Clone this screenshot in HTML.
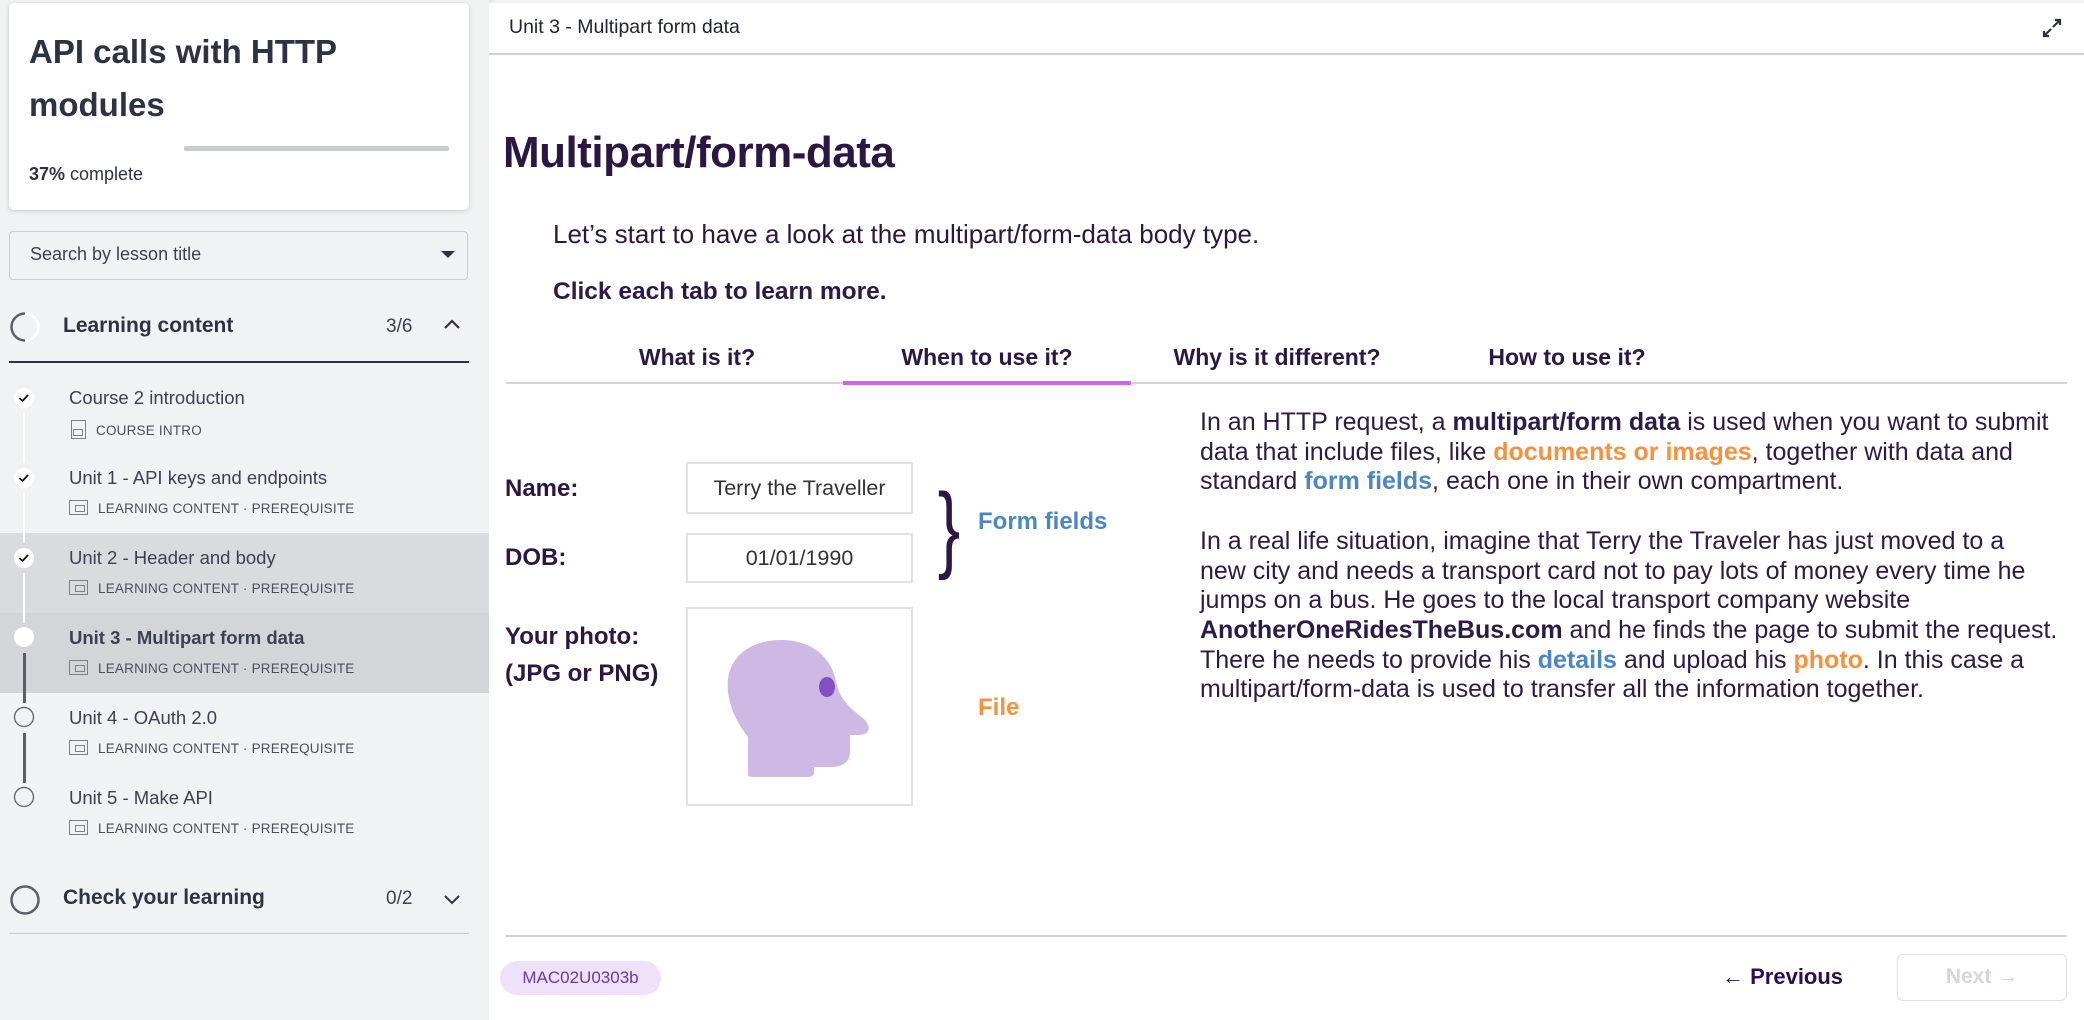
<!DOCTYPE html>
<html><head><meta charset="utf-8"><style>
*{margin:0;padding:0;box-sizing:border-box}
body{width:2084px;height:1020px;overflow:hidden;background:#f1f2f4;font-family:"Liberation Sans",sans-serif;position:relative}
.a{position:absolute;white-space:nowrap}
#side{position:absolute;left:0;top:0;width:489px;height:1020px;background:#f1f2f4;box-shadow:2px 0 6px rgba(0,0,0,.12)}
.card{position:absolute;left:9px;top:3px;width:460px;height:207px;background:#fff;border-radius:5px;box-shadow:0 1px 4px rgba(0,0,0,.18)}
.st{color:#3c4152}
.ti{font-size:18.5px;color:#3c4152}
.sub{font-size:13.5px;color:#4a4f5e;letter-spacing:.2px}
.ic{display:inline-block;width:19px;height:15px;border:1.5px solid #7a7f8c;vertical-align:-2px;margin-right:10px;position:relative}
.ic:after{content:"";position:absolute;right:2px;bottom:2px;width:8px;height:5px;border:1.2px solid #7a7f8c}
#main{position:absolute;left:489px;top:3px;width:1595px;height:1017px;background:#fff}
.m{color:#2b1744}
</style></head><body>
<div id="side">
 <div class="card">
  <div class="a" style="left:20px;top:22px;font-size:33px;line-height:53px;color:#2e3344;font-weight:bold;white-space:normal;width:420px">API calls with HTTP modules</div>
  <div class="a" style="left:175px;top:143px;width:265px;height:5px;background:#c8cad2;border-radius:2px"></div>
  <div class="a" style="left:20px;top:161px;font-size:18px;color:#2e3344"><b>37%</b> complete</div>
 </div>
 <div class="a" style="left:9px;top:231px;width:459px;height:49px;border:1px solid #c9ccd3;border-radius:4px;background:#f1f2f4"></div>
 <div class="a st" style="left:30px;top:244px;font-size:18px">Search by lesson title</div>
 <div class="a" style="left:441px;top:251px;width:0;height:0;border-left:7px solid transparent;border-right:7px solid transparent;border-top:7px solid #2e3344"></div>
 <svg class="a" style="left:9px;top:311px" width="32" height="32"><circle cx="16" cy="16" r="13.5" fill="none" stroke="#fff" stroke-width="2.5"/><path d="M16 2.5 A13.5 13.5 0 0 0 16 29.5" fill="none" stroke="#5a5f6c" stroke-width="2.5"/></svg>
 <div class="a" style="left:63px;top:314px;font-size:21px;font-weight:bold;color:#2e3344">Learning content</div>
 <div class="a st" style="left:386px;top:316px;font-size:19px">3/6</div>
 <svg class="a" style="left:443px;top:318px" width="18" height="12"><path d="M2 10 L9 3 L16 10" fill="none" stroke="#2e3344" stroke-width="2.2"/></svg>
 <div class="a" style="left:9px;top:361px;width:460px;height:1.5px;background:#2e3344"></div>
 <div class="a" style="left:0;top:533px;width:489px;height:80px;background:#dadbdf"></div>
 <div class="a" style="left:0;top:613px;width:489px;height:80px;background:#d4d5d9"></div>
 <div class="a" style="left:23px;top:413px;width:2px;height:50px;background:#fff"></div>
 <div class="a" style="left:23px;top:493px;width:2px;height:50px;background:#fff"></div>
 <div class="a" style="left:23px;top:573px;width:2px;height:50px;background:#fff"></div>
 <div class="a" style="left:23px;top:653px;width:2.5px;height:50px;background:#5a5f6c"></div>
 <div class="a" style="left:23px;top:733px;width:2.5px;height:50px;background:#5a5f6c"></div>
 <svg class="a" style="left:13px;top:387px" width="22" height="22"><circle cx="11" cy="11" r="10" fill="#fff"/><path d="M6.5 11 L9.5 14 L15 8" fill="none" stroke="#111" stroke-width="1.8"/></svg>
 <svg class="a" style="left:13px;top:467px" width="22" height="22"><circle cx="11" cy="11" r="10" fill="#fff"/><path d="M6.5 11 L9.5 14 L15 8" fill="none" stroke="#111" stroke-width="1.8"/></svg>
 <svg class="a" style="left:13px;top:547px" width="22" height="22"><circle cx="11" cy="11" r="10" fill="#fff"/><path d="M6.5 11 L9.5 14 L15 8" fill="none" stroke="#111" stroke-width="1.8"/></svg>
 <svg class="a" style="left:13px;top:626px" width="22" height="22"><circle cx="11" cy="11" r="10" fill="#fff"/></svg>
 <svg class="a" style="left:13px;top:706px" width="22" height="22"><circle cx="11" cy="11" r="9.5" fill="none" stroke="#5a5f6c" stroke-width="1.3"/></svg>
 <svg class="a" style="left:13px;top:786px" width="22" height="22"><circle cx="11" cy="11" r="9.5" fill="none" stroke="#5a5f6c" stroke-width="1.3"/></svg>
 <div class="a ti" style="left:69px;top:387px">Course 2 introduction</div>
 <div class="a sub" style="left:71px;top:420px"><span class="ic" style="width:15px;height:19px;vertical-align:-4px"></span>COURSE INTRO</div>
 <div class="a ti" style="left:69px;top:467px">Unit 1 - API keys and endpoints</div>
 <div class="a sub" style="left:69px;top:500px"><span class="ic"></span>LEARNING CONTENT · PREREQUISITE</div>
 <div class="a ti" style="left:69px;top:547px">Unit 2 - Header and body</div>
 <div class="a sub" style="left:69px;top:580px"><span class="ic"></span>LEARNING CONTENT · PREREQUISITE</div>
 <div class="a ti" style="left:69px;top:627px;font-weight:bold">Unit 3 - Multipart form data</div>
 <div class="a sub" style="left:69px;top:660px"><span class="ic"></span>LEARNING CONTENT · PREREQUISITE</div>
 <div class="a ti" style="left:69px;top:707px">Unit 4 - OAuth 2.0</div>
 <div class="a sub" style="left:69px;top:740px"><span class="ic"></span>LEARNING CONTENT · PREREQUISITE</div>
 <div class="a ti" style="left:69px;top:787px">Unit 5 - Make API</div>
 <div class="a sub" style="left:69px;top:820px"><span class="ic"></span>LEARNING CONTENT · PREREQUISITE</div>
 <svg class="a" style="left:9px;top:884px" width="32" height="32"><circle cx="16" cy="16" r="13.5" fill="none" stroke="#5a5f6c" stroke-width="2.5"/></svg>
 <div class="a" style="left:63px;top:886px;font-size:21px;font-weight:bold;color:#2e3344">Check your learning</div>
 <div class="a st" style="left:386px;top:888px;font-size:19px">0/2</div>
 <svg class="a" style="left:443px;top:894px" width="18" height="12"><path d="M2 2 L9 9 L16 2" fill="none" stroke="#2e3344" stroke-width="2"/></svg>
 <div class="a" style="left:9px;top:933px;width:460px;height:1px;background:#c9ccd3"></div>
</div>
<div id="main">
 <div class="a" style="left:20px;top:13px;font-size:19.5px;color:#1f2233">Unit 3 - Multipart form data</div>
 <div class="a" style="left:0;top:50px;width:1595px;height:1.5px;background:#d0d1d6"></div>
 <svg class="a" style="left:1552px;top:14px" width="22" height="22"><path d="M12 10 L19 3 M14 3 H19 V8 M10 12 L3 19 M3 14 V19 H8" fill="none" stroke="#2e3344" stroke-width="2.2"/></svg>
 <div class="a m" style="left:14px;top:125px;font-size:44px;font-weight:bold;letter-spacing:-.5px">Multipart/form-data</div>
 <div class="a m" style="left:64px;top:216px;font-size:26px">Let’s start to have a look at the multipart/form-data body type.</div>
 <div class="a m" style="left:64px;top:275px;font-size:24.5px;font-weight:bold;color:#2e1a48">Click each tab to learn more.</div>
 <div class="a m" style="left:63px;top:341px;width:290px;text-align:center;font-size:23px;font-weight:bold">What is it?</div>
 <div class="a m" style="left:353px;top:341px;width:290px;text-align:center;font-size:23px;font-weight:bold">When to use it?</div>
 <div class="a m" style="left:643px;top:341px;width:290px;text-align:center;font-size:23px;font-weight:bold">Why is it different?</div>
 <div class="a m" style="left:933px;top:341px;width:290px;text-align:center;font-size:23px;font-weight:bold">How to use it?</div>
 <div class="a" style="left:17px;top:379px;width:1561px;height:2px;background:#d4d4d8"></div>
 <div class="a" style="left:354px;top:378px;width:288px;height:4px;background:#d45ff0"></div>
 <div class="a m" style="left:16px;top:472px;font-size:24px;font-weight:bold">Name:</div>
 <div class="a m" style="left:16px;top:541px;font-size:24px;font-weight:bold">DOB:</div>
 <div class="a m" style="left:16px;top:615px;font-size:24px;font-weight:bold;line-height:37px">Your photo:<br>(JPG or PNG)</div>
 <div class="a" style="left:197px;top:459px;width:227px;height:52px;border:2px solid #e2e2e2;line-height:48px;text-align:center;font-size:21.5px;color:#333">Terry the Traveller</div>
 <div class="a" style="left:197px;top:530px;width:227px;height:50px;border:2px solid #e2e2e2;line-height:46px;text-align:center;font-size:21.5px;color:#333">01/01/1990</div>
 <div class="a" style="left:197px;top:604px;width:227px;height:199px;border:2px solid #e2e2e2"></div>
 <svg class="a" style="left:197px;top:604px" width="227" height="199"><path d="M62 168 L62 130 C48 112 40 92 42 72 C45 48 66 33 95 33 C125 33 146 50 150 75 C153 90 162 100 178 112 C186 120 184 128 172 128 L164 128 L164 145 C164 155 156 160 146 160 L128 160 L128 166 C128 169 125 170 121 170 L68 170 C64 170 62 169 62 168 Z" fill="#cdb9e4"/><ellipse cx="141" cy="80" rx="8" ry="10" fill="#8450c0"/></svg>
 <div class="a" style="left:444px;top:460px;font-size:96px;line-height:130px;color:#2b1744;transform:scaleX(.7)">}</div>
 <div class="a" style="left:489px;top:505px;font-size:24px;font-weight:bold;color:#4a86c8">Form fields</div>
 <div class="a" style="left:489px;top:691px;font-size:24px;font-weight:bold;color:#f7913f">File</div>
 <div class="a m" style="left:711px;top:405px;font-size:25px;line-height:29.7px;color:#2e1a48">In an HTTP request, a <b>multipart/form data</b> is used when you want to submit<br>data that include files, like <b style="color:#f7913f">documents or images</b>, together with data and<br>standard <b style="color:#4a86c8">form fields</b>, each one in their own compartment.<br><br>In a real life situation, imagine that Terry the Traveler has just moved to a<br>new city and needs a transport card not to pay lots of money every time he<br>jumps on a bus. He goes to the local transport company website<br><b>AnotherOneRidesTheBus.com</b> and he finds the page to submit the request.<br>There he needs to provide his <b style="color:#4a86c8">details</b> and upload his <b style="color:#f7913f">photo</b>. In this case a<br>multipart/form-data is used to transfer all the information together.</div>
 <div class="a" style="left:17px;top:932px;width:1561px;height:2px;background:#d4d0d4"></div>
 <div class="a" style="left:11px;top:958px;width:161px;height:34px;border-radius:17px;background:#eee1f9;color:#6a3aa0;font-size:17px;line-height:34px;text-align:center">MAC02U0303b</div>
 <div class="a" style="left:1233px;top:961px;font-size:22px;font-weight:bold;color:#2b0f50">← Previous</div>
 <div class="a" style="left:1408px;top:951px;width:170px;height:47px;border:1.5px solid #e3dfe9;border-radius:6px;color:#d9d4e3;font-size:21px;font-weight:bold;line-height:44px;text-align:center">Next →</div>
</div>
</body></html>
